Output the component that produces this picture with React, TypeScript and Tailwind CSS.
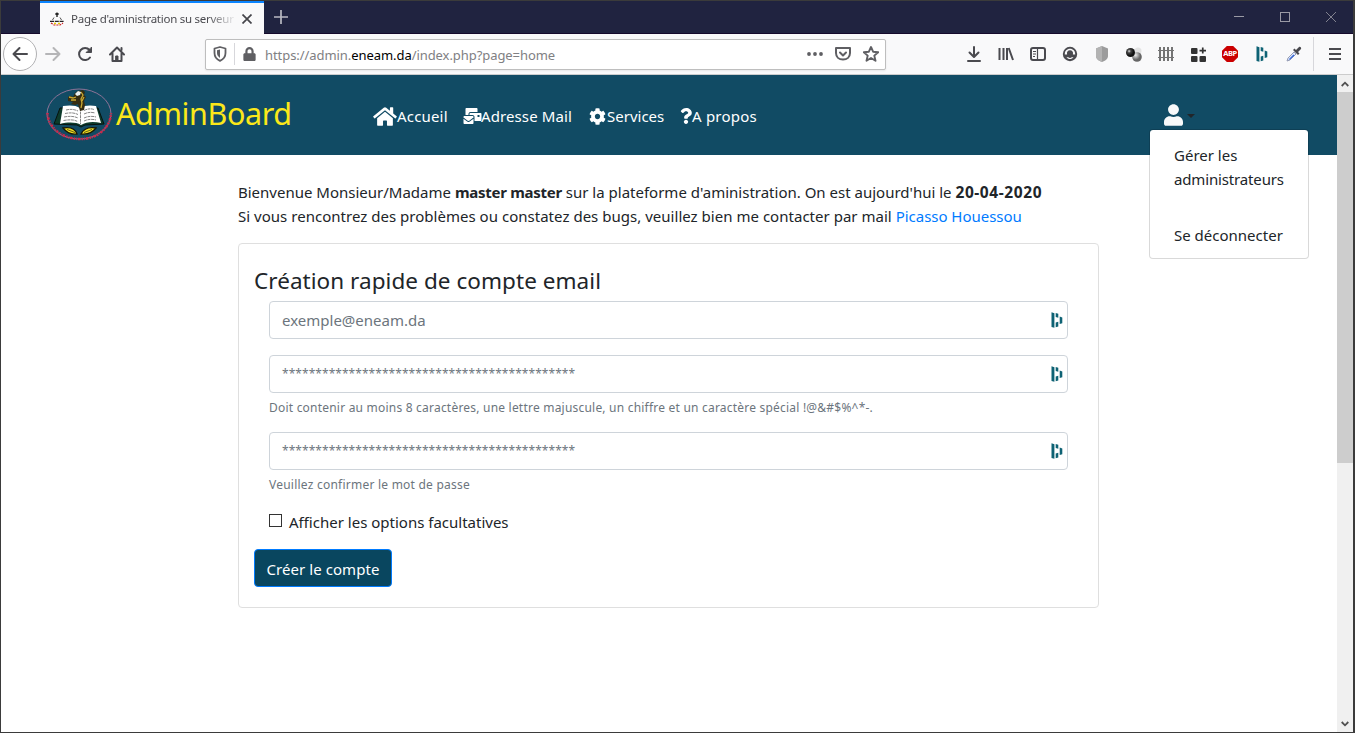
import React from "react";
import { FaHome, FaMailBulk, FaCog, FaQuestion, FaUser, FaLock } from "react-icons/fa";

function Icon({ children, size = 16 }: { children: React.ReactNode; size?: number }) {
  return (
    <svg width={size} height={size} viewBox="0 0 16 16" fill="none" stroke="currentColor" strokeWidth="2" strokeLinecap="round" strokeLinejoin="round">
      {children}
    </svg>
  );
}

function Cell({ children }: { children: React.ReactNode }) {
  return <div className="flex h-8 w-8 shrink-0 items-center justify-center">{children}</div>;
}

function Dashlane() {
  return (
    <svg width="12" height="16" viewBox="0 0 12 16" fill="#0e6274">
      <path d="M.5.3l2.900.9v14.500l-2.900-.8z M4.700 1l2.600.8v4l-2.600-.8z M4.700 10.500l2.600-.8v4.800l-2.600.8z M8.700 4.500l2.600.9v5.800l-2.600.8z" />
    </svg>
  );
}

function Crest() {
  return (
    <svg width="68" height="54" viewBox="0 0 68 54">
      <ellipse cx="33" cy="26" rx="32" ry="25" fill="none" stroke="#8d7397" strokeWidth="1" />
      <path d="M1.500 25C2 39 15 50.500 33.500 51S64.500 39 65 25" fill="none" stroke="#c8284a" strokeWidth="2.600" strokeDasharray="1.600 1 1 .8 2.500 1" />
      <path d="M14 20L8 36l23 1 4 2 4-2 19-1-6-16z" fill="#0d3b2c" stroke="#06120e" strokeWidth="1" />
      <path d="M17 18c6-1 13-1 17 2 4-3 11-3 16-2l5 17c-8-2-15-1-20 2-5-3-13-3-21-1z" fill="#fff" />
      <path d="M34.500 20v16M20 22c4-1 8-1 12 1M19 25.500c5-1 9-1 13 1M18 29c5-1 10-1 14 1M17.500 32.500c6-1 11-1 14 1M38 22.500c4-2 7-2 10-1M38 26c4-2 8-2 11-1M38 30c4-2 9-2 12-1M38 33c4-2 9-2 12-1" fill="none" stroke="#777" strokeWidth=".9" strokeDasharray="3 .6" />
      <path d="M22 9l3-1 2 1 2-4 3-2 5-1 2 2-1 3 2 2-2 4 1 4-1 5-4 1-2-7-3 1-4-1 2-2-5-1z" fill="#342c12" />
      <path d="M23 9l4 1 3-1M25 12l5 0M35 4l2 3-2 4 1 4-1 5M38 9l-2 4" fill="none" stroke="#c7a832" strokeWidth="1.300" />
      <path d="M29 6l3-3 3 1-1 3-3 1z" fill="#e8eef0" />
      <path d="M17 40c6-1 12 0 14 6-6 1-10-1-14-6zM50 40c-6-1-12 0-15 6 7 1 11-1 15-6z" fill="#f0df22" stroke="#171707" strokeWidth="1.300" />
      <path d="M21 41.500l8 3M46 41.500l-8 3" stroke="#473e0c" strokeWidth=".8" />
    </svg>
  );
}

function TitleBar() {
  return (
    <div className="flex h-[33px] bg-[#202340]">
      <div className="w-[39px] border-b border-[#150a2c]" />
      <div className="flex w-[224px] items-center border-t-[2px] border-[#0a84ff] bg-[#f9f9fa] pl-[9px]">
        <svg width="16" height="14" viewBox="0 0 16 14">
          <path d="M8 .5v4.500M6.300 2h3.400" fill="none" stroke="#111" strokeWidth="1.300" />
          <path d="M3.500 8L5 5.500M12.500 8L11 5.500" stroke="#555" strokeWidth="1" />
          <path d="M1 9.300h14" stroke="#222" strokeWidth="1.300" strokeDasharray="4 .8" />
          <path d="M2 11l3 2h6l3-2" fill="none" stroke="#c22" strokeWidth="1.200" strokeDasharray="2 1" />
          <path d="M5 11.500h2M9 11.500h2" stroke="#e6c800" strokeWidth="1.500" />
        </svg>
        <div className="ml-[6px] w-[166px] overflow-hidden whitespace-nowrap text-[11.500px] tracking-[-0.26px] text-[#4a4a4f] [mask-image:linear-gradient(to_right,black_82%,transparent_100%)]">
          Page d'aministration su serveur
        </div>
        <svg className="ml-[5px]" width="10" height="10" viewBox="0 0 10 10" stroke="#45454a" strokeWidth="1.700"><path d="M.5.5l9 9M9.500.5l-9 9" /></svg>
      </div>
      <div className="flex flex-1 border-b border-[#150a2c]">
        <svg className="ml-[10px] mt-[9px]" width="14" height="14" viewBox="0 0 14 14" stroke="#b9b9c2" strokeWidth="1.700"><path d="M7 0v14M0 7h14" /></svg>
        <div className="ml-auto flex items-center gap-[36px] pr-[17px]">
          <svg width="10" height="10" viewBox="0 0 10 10" stroke="#9a9aa5" shapeRendering="crispEdges"><path d="M0 4.500h10" /></svg>
          <svg width="10" height="10" viewBox="0 0 10 10" fill="none" stroke="#9a9aa5" shapeRendering="crispEdges"><path d="M.5.5h9v9h-9z" /></svg>
          <svg width="10" height="10" viewBox="0 0 10 10" stroke="#8d8d99" strokeWidth=".9"><path d="M0 0l10 10M10 0L0 10" /></svg>
        </div>
      </div>
    </div>
  );
}

function Toolbar() {
  return (
    <div className="flex h-[41px] items-center border-b border-[#ccc] bg-[#f9f9fa] text-[#4a4a4f]">
      <div className="ml-[2px] flex h-[34px] w-[34px] items-center justify-center rounded-full border border-[#b1b1b3] bg-white">
        <Icon><path d="M15 8H1.500M7.500 2L1.500 8l6 6" /></Icon>
      </div>
      <div className="flex text-[#b5b5b7]"><Cell><Icon><path d="M1 8h13.500M8.500 2l6 6-6 6" /></Icon></Cell></div>
      <Cell><Icon><path d="M13 11.500A6 6 0 1 1 12.500 4" /><path d="M14.500 1.500v5h-5z" fill="currentColor" strokeWidth="1" /></Icon></Cell>
      <Cell><Icon><path d="M1 8.500L8 1.500l7 7M3.500 7.500V15h9V7.500" /><path d="M7 10h2v5H7z" fill="currentColor" strokeWidth="1" /><path d="M12.500 2v2" /></Icon></Cell>
      <div className="ml-[72px] flex h-[31px] w-[681px] items-center rounded-[2px] border border-[#bebebe] bg-white shadow-[0_1px_2px_rgba(0,0,0,0.08)]">
        <svg className="ml-[7px] text-[#5f5f63]" width="14" height="16" viewBox="0 0 14 16" fill="none" stroke="currentColor" strokeWidth="1.800">
          <path d="M1.500 2.500L7 1l5.500 1.500V7c0 4-2.500 6.500-5.500 7.800C4 13.500 1.500 11 1.500 7z" strokeLinejoin="round" />
          <path d="M7 3.500v8.500C5 10.500 4 9 4 7V4.300z" fill="currentColor" stroke="none" />
        </svg>
        <div className="ml-[7px] h-[22px] w-px bg-[#d7d7db]" />
        <FaLock className="ml-[8px] h-[14px] w-[13px] text-[#5f5f63]" />
        <div className="ml-[9px] mt-px whitespace-nowrap text-[13px] leading-[20px] tracking-[-0.065px] text-[#808083]">
          https://admin.<span className="text-black">eneam.da</span>/index.php?page=home
        </div>
        <div className="ml-auto flex items-center pr-[6px] text-[#5f5f63]">
          <svg width="16" height="16" viewBox="0 0 16 16" fill="currentColor"><circle cx="2" cy="8" r="1.900" /><circle cx="8" cy="8" r="1.900" /><circle cx="14" cy="8" r="1.900" /></svg>
          <svg className="ml-[12px]" width="16" height="16" viewBox="0 0 16 16" fill="none" stroke="currentColor" strokeWidth="2" strokeLinecap="round" strokeLinejoin="round"><path d="M1 2h14v5c0 4-3 6.500-7 6.500S1 11 1 7z" /><path d="M5 6.500l3 3 3-3" /></svg>
          <svg className="ml-[12px]" width="16" height="16" viewBox="0 0 16 16" fill="none" stroke="currentColor" strokeWidth="1.900" strokeLinejoin="round"><path d="M8 1l2.100 4.700 5.100.5-3.900 3.400 1.200 5.200L8 12l-4.500 2.800 1.200-5.200L.8 6.200l5.100-.5z" /></svg>
        </div>
      </div>
      <div className="ml-[72px] flex items-center">
        <Cell><Icon><path d="M8 1v9.500M3.500 6.500L8 11l4.500-4.500M2 15h12" /></Icon></Cell>
        <Cell><svg width="16" height="16" viewBox="0 0 16 16" stroke="currentColor" strokeWidth="2"><path d="M1.500 2v12M5.500 2v12M9 2v12M10.700 2l4.300 12" /></svg></Cell>
        <Cell><svg width="16" height="16" viewBox="0 0 16 16" fill="none" stroke="currentColor" strokeWidth="2"><rect x="1" y="2" width="14" height="12" rx="2" /><path d="M7.500 2v12" strokeWidth="1.200" /><path d="M3 5.500h3M3 8h3M3 10.500h2" strokeWidth="1" /></svg></Cell>
        <Cell>
          <svg width="16" height="16" viewBox="0 0 16 16" fill="currentColor">
            <circle cx="8" cy="8" r="7.200" />
            <path d="M2.800 8.500C2.700 5 5 2.800 8 2.800s5.300 2.200 5.200 5.700h-2.300c.7-2.500-.7-4.300-2.900-4.300S4.400 6 5.100 8.500z" fill="#f9f9fa" />
            <path d="M4.500 11.300h1.800c.9.900 2.500.9 3.400 0h1.800c-1.500 2.400-5.500 2.400-7 0z" fill="#f9f9fa" />
          </svg>
        </Cell>
        <Cell><svg className="-ml-px" width="14" height="16" viewBox="0 0 14 16"><path d="M7 0l6 2.500V10c0 3-3 5-6 6-3-1-6-3-6-6V2.500z" fill="#9c9c9c" /><path d="M7 0v16c-3-1-6-3-6-6V2.500z" fill="#b3b3b3" /></svg></Cell>
        <Cell>
          <svg width="18" height="16" viewBox="0 0 18 16">
            <defs>
              <radialGradient id="dark" cx=".35" cy=".35"><stop offset="0" stopColor="#ddd" /><stop offset=".4" stopColor="#444" /><stop offset="1" stopColor="#111" /></radialGradient>
              <radialGradient id="mid" cx=".35" cy=".3"><stop offset="0" stopColor="#eee" /><stop offset="1" stopColor="#666" /></radialGradient>
            </defs>
            <circle cx="13" cy="5" r="3.500" fill="#e3e3e3" /><circle cx="12" cy="11" r="4.800" fill="url(#mid)" /><circle cx="5.500" cy="6.500" r="4.500" fill="url(#dark)" />
          </svg>
        </Cell>
        <Cell><svg width="16" height="14" viewBox="0 0 16 14" stroke="#747474" strokeWidth="2"><path d="M2 0v14M6 0v14M10 0v14M14 0v14" /><path d="M0 3.500h16M0 10.500h16" strokeWidth="1" /></svg></Cell>
        <Cell><svg width="15" height="15" viewBox="0 0 15 15" fill="#333"><rect x="0" y="1" width="6.500" height="6" rx="1" /><rect x="0" y="9" width="6.500" height="6" rx="1" /><rect x="8.500" y="9" width="6.500" height="6" rx="1" /><path d="M10.900.5h1.700v2.200H15v1.700h-2.400v2.200h-1.700V4.400H8.500V2.700h2.400z" /></svg></Cell>
        <Cell>
          <div className="flex h-4 w-4 items-center justify-center bg-[#cb0000] text-[7.500px] font-bold leading-none tracking-[-0.4px] text-white [clip-path:polygon(30%_0,70%_0,100%_30%,100%_70%,70%_100%,30%_100%,0_70%,0_30%)]">ABP</div>
        </Cell>
        <Cell><Dashlane /></Cell>
        <Cell>
          <svg width="16" height="16" viewBox="0 0 16 16"><path d="M1 15l1-3 6-6 2 2-6 6z" fill="#dfe8fb" stroke="#8c93ad" strokeWidth=".9" /><path d="M2.500 13.500l5-5 1 1-4.500 4z" fill="#3264d8" /><path d="M7 4l5 5 1.500-1.500L12 6l3-3c.8-1-.9-2.900-2-2l-3 3-1.500-1.500z" fill="#48484d" /></svg>
        </Cell>
      </div>
      <div className="ml-[3px] h-[34px] w-px bg-[#d7d7db]" />
      <svg className="ml-[15px]" width="12" height="12" viewBox="0 0 12 12" stroke="currentColor" strokeWidth="2"><path d="M0 1h12M0 6h12M0 11h12" /></svg>
    </div>
  );
}

function Navbar() {
  return (
    <header className="relative flex h-[80px] bg-[#114b64] text-white">
      <div className="ml-[45px] mt-[13px]"><Crest /></div>
      <div className="ml-[2px] mt-[14px] w-[180px] whitespace-nowrap text-[30.500px] leading-[48px] tracking-[-0.4px] text-[#fbe81a]">AdminBoard</div>
      <nav className="ml-[77px] mt-[29px] flex h-[24px] whitespace-nowrap text-[15px] leading-[24px]">
        <a className="flex w-[90px] items-center tracking-[0.18px]"><FaHome className="h-[21px] w-[24px] shrink-0" />Accueil</a>
        <a className="flex w-[126px] items-center tracking-[0.1px]"><FaMailBulk className="-mr-px h-[16px] w-[19px] shrink-0" />Adresse Mail</a>
        <a className="flex w-[91px] items-center"><FaCog className="mr-px h-[17px] w-[17px] shrink-0" />Services</a>
        <a className="flex items-center tracking-[0.22px]"><FaQuestion className="h-[16px] w-[12px] shrink-0" />A propos</a>
      </nav>
      <div className="ml-auto mr-[142px] mt-[29px] flex h-[22px] items-center">
        <FaUser className="h-[22px] w-[19px] text-[#f8f9fa]" />
        <span className="ml-[4px] mt-[2px] border-x-[4px] border-t-[4px] border-x-transparent border-t-[#212529]" />
      </div>
      <div className="absolute right-[28px] top-[54px] z-10 h-[130px] w-[160px] whitespace-nowrap rounded-[4px] border border-black/15 bg-white bg-clip-padding pl-[24px] pt-[13px] text-[15px] leading-[24px] text-[#212529]">
        <div>Gérer les</div>
        <div className="tracking-[-0.15px]">administrateurs</div>
        <div className="mt-[32px]">Se déconnecter</div>
      </div>
    </header>
  );
}

function Field({ children }: { children: React.ReactNode }) {
  return (
    <div className="flex h-[38px] w-[799px] items-center justify-between whitespace-nowrap rounded-[4px] border border-[#ced4da] pl-[12px] pr-[4px] text-[15px] leading-[24px] text-[#6c757d]">
      {children}
      <Dashlane />
    </div>
  );
}

function Stars() {
  return <span className="text-[12px] leading-[20px] tracking-[0.05px]">{"*".repeat(44)}</span>;
}

function Scrollbar() {
  return (
    <div className="flex w-[16px] flex-col items-center bg-[#f0f0f0]">
      <div className="flex h-[17px] items-center"><svg width="8" height="6" viewBox="0 0 8 6" fill="none" stroke="#505050" strokeWidth="1.800"><path d="M.7 5L4 1.700 7.300 5" /></svg></div>
      <div className="h-[371px] w-full bg-[#cdcdcd]" />
      <div className="mt-auto flex h-[17px] items-center"><svg width="8" height="6" viewBox="0 0 8 6" fill="none" stroke="#505050" strokeWidth="1.800"><path d="M.7 1L4 4.300 7.300 1" /></svg></div>
    </div>
  );
}

export default function App() {
  return (
    <div className="flex h-[733px] w-[1355px] flex-col overflow-hidden border-b border-l border-r-2 border-t border-[#3b3b3b] bg-white font-['Noto_Sans','Open_Sans',sans-serif]">
      <TitleBar />
      <Toolbar />
      <div className="flex min-h-0 flex-1">
        <div className="flex-1">
          <Navbar />
          <main className="ml-[237px] w-[861px] pt-[25px] text-[15px] leading-[24px] text-[#212529]">
            <p className="h-[24px] whitespace-nowrap">
              Bienvenue Monsieur/Madame <b className="tracking-[-0.27px]">master master</b> sur la plateforme d'aministration. On est aujourd'hui le <b className="text-[15.500px] tracking-[0.58px]">20-04-2020</b>
            </p>
            <p className="h-[24px] whitespace-nowrap tracking-[0.022px]">
              Si vous rencontrez des problèmes ou constatez des bugs, veuillez bien me contacter par mail <a className="tracking-[-0.03px] text-[#007bff]">Picasso Houessou</a>
            </p>
            <section className="mt-[15px] h-[365px] rounded-[4px] border border-[#dfdfdf] px-[15px] pt-[22px]">
              <h4 className="whitespace-nowrap text-[22.500px] leading-[30px] tracking-[0.05px]">Création rapide de compte email</h4>
              <div className="ml-[15px] mt-[5px]">
                <Field><span>exemple@eneam.da</span></Field>
                <div className="mt-[16px]"><Field><Stars /></Field></div>
                <p className="mt-[5px] h-[19px] whitespace-nowrap text-[12px] leading-[20px] tracking-[0.212px] text-[#6c757d]">Doit contenir au moins 8 caractères, une lettre majuscule, un chiffre et un caractère spécial !@&amp;#$%^*-.</p>
                <div className="mt-[15px]"><Field><Stars /></Field></div>
                <p className="mt-[5px] h-[19px] whitespace-nowrap text-[12px] leading-[20px] tracking-[0.233px] text-[#6c757d]">Veuillez confirmer le mot de passe</p>
                <label className="mt-[16px] flex h-[24px] items-center"><span className="mb-[3px] mr-[7px] h-[13px] w-[13px] border border-[#333] bg-white" />Afficher les options facultatives</label>
              </div>
              <button className="mt-[15px] flex h-[38px] w-[138px] items-center justify-center whitespace-nowrap rounded-[4px] border border-[#007bff] bg-[#09465f] pt-[2px] tracking-[0.065px] text-white">Créer le compte</button>
            </section>
          </main>
        </div>
        <Scrollbar />
      </div>
    </div>
  );
}
